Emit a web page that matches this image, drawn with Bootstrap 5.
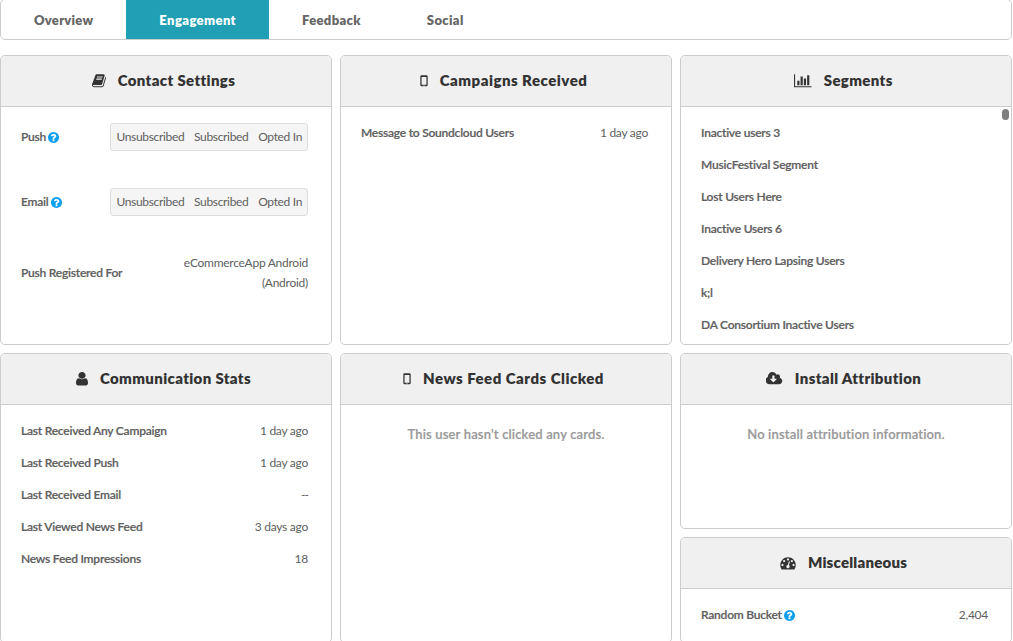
<!DOCTYPE html>
<html lang="en">
<head>
<meta charset="utf-8">
<meta name="viewport" content="width=device-width, initial-scale=1">
<title>User profile – Engagement</title>
<link href="https://cdn.jsdelivr.net/npm/bootstrap@5.3.0/dist/css/bootstrap.min.css" rel="stylesheet">
<style>
body{font-family:Lato,"Open Sans",sans-serif;font-size:12px;line-height:20px;color:#606060;background:#fff;overflow:hidden;height:641px}
.page{width:1012px}
.profile-tabs{height:41px;margin-top:-1px;border:1px solid #ccc;border-radius:5px;overflow:hidden}
.profile-tabs .nav-link{height:39px;padding:0 33px;line-height:41px;font-size:13px;font-weight:800;color:#666;border-radius:0;letter-spacing:.25px}
.profile-tabs .nav-link.active{background:#219fb5;color:#fff;letter-spacing:.4px}
.profile-tabs .nav-link.active~.nav-link{letter-spacing:.35px}
.board{display:grid;grid-template-columns:repeat(3,332px);gap:8px;margin-top:15px}
.panel{height:290px;border:1px solid #ccc;border-radius:5px;overflow:hidden}
.panel>.card-header{flex:none;height:52px;padding:0 5px 1px 0;background:#f0f0f0;border-bottom:1px solid #ccc;color:#333;font-size:15px;font-weight:800;letter-spacing:.35px;gap:12px}
.panel>.card-header{height:51px}
.panel>.card-body{padding:16px 23px 0 20px}
.panel h2{font:inherit;margin:0;padding-bottom:2px}
.wider h2{letter-spacing:.5px}
.tighter h2{letter-spacing:.22px}
.ico{height:15.5px;fill:currentColor;flex:none}
.line{height:20px;margin-bottom:12px}
.line b{font-weight:600;-webkit-text-stroke:.2px;letter-spacing:-.23px}
.line span{letter-spacing:-.26px}
.hint{width:11px;height:11px;fill:#0d9ff0;vertical-align:-1.5px;margin-left:2px}
.choice{height:28px;border:1px solid #ddd;border-radius:3px;background:#f5f5f5;padding:0 5px;gap:9.8px}
.choice span{letter-spacing:-.34px}
.empty{font-size:13px;font-weight:600;color:#999;text-align:center;padding:3px 0 0 3px;letter-spacing:.16px;-webkit-text-stroke:.2px}
.thumb{position:absolute;right:2px;top:53px;width:7px;height:11px;border-radius:4px;background:#7f7f7f}
</style>
</head>
<body>
<svg class="d-none"><defs>
<symbol id="q" viewBox="128 128 1536 1536"><path d="M1024 1376v-192q0-14-9-23t-23-9h-192q-14 0-23 9t-9 23v192q0 14 9 23t23 9h192q14 0 23-9t9-23zm256-672q0-88-55.5-163t-138.5-116-170-41q-243 0-371 213-15 24 8 42l132 100q7 6 19 6 16 0 25-12 53-68 86-92 34-24 86-24 48 0 85.5 26t37.5 59q0 38-20 61t-68 45q-63 28-115.5 86.5t-52.5 125.5v36q0 14 9 23t23 9h192q14 0 23-9t9-23q0-19 21.5-49.5t54.5-49.5q32-18 49-28.5t46-35 44.5-48 28-60.5 12.5-81zm384 192q0 209-103 385.5t-279.5 279.5-385.5 103-385.5-103-279.5-279.5-103-385.5 103-385.5 279.5-279.5 385.5-103 385.5 103 279.5 279.5 103 385.5z"/></symbol>
<symbol id="mobile" viewBox="0 0 8 16"><path fill-rule="evenodd" d="M1.5 2.4h5q1.3 0 1.3 1.3v8.8q0 1.3-1.3 1.3h-5q-1.3 0-1.3-1.3v-8.8q0-1.3 1.3-1.3zM1.5 4.2v7.8h5v-7.8zM3.5 12.5h1v.7h-1z"/></symbol>
</defs></svg>
<div class="page">
  <nav class="nav profile-tabs">
    <a class="nav-link" href="#"><span>Overview</span></a>
    <a class="nav-link active" href="#"><span>Engagement</span></a>
    <a class="nav-link" href="#"><span>Feedback</span></a>
    <a class="nav-link" href="#"><span>Social</span></a>
  </nav>
  <main class="board">
    <section class="card panel">
      <div class="card-header d-flex justify-content-center align-items-center"><svg class="ico" width="14" viewBox="64 0 1664 1792"><path d="M1703 478q40 57 18 129l-275 906q-19 64-76.5 107.5t-122.5 43.5h-923q-77 0-148.5-53.5t-99.5-131.5q-24-67-2-127 0-4 3-27t4-37q1-8-3-21.5t-3-19.5q2-11 8-21t16.5-23.5 16.5-23.5q23-38 45-91.5t30-91.5q3-10 .5-30t-.5-28q3-11 17-28t17-23q21-36 42-92t25-90q1-9-2.5-32t.5-28q4-13 22-30.5t22-22.5q19-26 42.5-84.5t27.5-96.5q1-8-3-25.5t-2-26.5q2-8 9-18t18-23 17-21q8-12 16.5-30.5t15-35 16-36 19.5-32 26.5-23.5 36-11.5 47.5 5.5l-1 3q38-9 51-9h761q74 0 114 56t18 130l-274 906q-36 119-71.5 153.5t-128.5 34.5h-869q-27 0-38 15-11 16-1 43 24 70 144 70h923q29 0 56-15.5t35-41.5l300-987q7-22 5-57 38 15 59 43zm-1064 2q-4 13 2 22.5t20 9.5h608q13 0 25.5-9.5t16.5-22.5l21-64q4-13-2-22.5t-20-9.5h-608q-13 0-25.5 9.5t-16.5 22.5zm-83 256q-4 13 2 22.5t20 9.5h608q13 0 25.5-9.5t16.5-22.5l21-64q4-13-2-22.5t-20-9.5h-608q-13 0-25.5 9.5t-16.5 22.5z"/></svg><h2>Contact Settings</h2></div>
      <div class="card-body">
        <div class="d-flex justify-content-between align-items-center line" style="height:28px;margin-bottom:37px"><b>Push<svg class="hint"><use href="#q"/></svg></b><div class="choice d-flex align-items-center"><span>Unsubscribed</span><span>Subscribed</span><span>Opted In</span></div></div>
        <div class="d-flex justify-content-between align-items-center line" style="height:28px;margin-bottom:37px"><b>Email<svg class="hint"><use href="#q"/></svg></b><div class="choice d-flex align-items-center"><span>Unsubscribed</span><span>Subscribed</span><span>Opted In</span></div></div>
        <div class="d-flex justify-content-between align-items-center line" style="height:40px"><b>Push Registered For</b><span class="text-end">eCommerceApp Android<br>(Android)</span></div>
      </div>
    </section>
    <section class="card panel">
      <div class="card-header wider d-flex justify-content-center align-items-center"><svg class="ico" width="8"><use href="#mobile"/></svg><h2>Campaigns Received</h2></div>
      <div class="card-body"><div class="d-flex justify-content-between line"><b>Message to Soundcloud Users</b><span>1 day ago</span></div></div>
    </section>
    <section class="card panel">
      <div class="card-header d-flex justify-content-center align-items-center"><svg class="ico" width="17.5" viewBox="0 0 2048 1792"><path d="M640 896v512h-256v-512h256zm384-512v1024h-256v-1024h256zm1024 1152v128h-2048v-1536h128v1408h1920zm-640-896v768h-256v-768h256zm384-384v1152h-256v-1152h256z"/></svg><h2>Segments</h2></div>
      <div class="card-body">
        <div class="line"><b>Inactive users 3</b></div>
        <div class="line"><b>MusicFestival Segment</b></div>
        <div class="line"><b>Lost Users Here</b></div>
        <div class="line"><b>Inactive Users 6</b></div>
        <div class="line"><b>Delivery Hero Lapsing Users</b></div>
        <div class="line"><b>k;l</b></div>
        <div class="line mb-0"><b>DA Consortium Inactive Users</b></div>
      </div>
      <i class="thumb"></i>
    </section>
    <section class="card panel">
      <div class="card-header d-flex justify-content-center align-items-center"><svg class="ico" width="12" viewBox="256 0 1280 1792" preserveAspectRatio="none"><path d="M1536 1399q0 109-62.5 187t-150.5 78h-854q-88 0-150.5-78t-62.5-187q0-85 8.5-160.5t31.5-152 58.5-131 94-89 134.5-34.5q131 128 313 128t313-128q76 0 134.5 34.5t94 89 58.5 131 31.5 152 8.5 160.5zm-256-887q0 159-112.5 271.5t-271.5 112.5-271.5-112.5-112.5-271.5 112.5-271.5 271.5-112.5 271.5 112.5 112.5 271.5z"/></svg><h2>Communication Stats</h2></div>
      <div class="card-body">
        <div class="d-flex justify-content-between line"><b>Last Received Any Campaign</b><span>1 day ago</span></div>
        <div class="d-flex justify-content-between line"><b>Last Received Push</b><span>1 day ago</span></div>
        <div class="d-flex justify-content-between line"><b>Last Received Email</b><span style="letter-spacing:-.9px">--</span></div>
        <div class="d-flex justify-content-between line"><b>Last Viewed News Feed</b><span>3 days ago</span></div>
        <div class="d-flex justify-content-between line"><b>News Feed Impressions</b><span>18</span></div>
      </div>
    </section>
    <section class="card panel">
      <div class="card-header wider d-flex justify-content-center align-items-center"><svg class="ico" width="8"><use href="#mobile"/></svg><h2>News Feed Cards Clicked</h2></div>
      <div class="card-body"><div class="empty">This user hasn't clicked any cards.</div></div>
    </section>
    <div class="d-flex flex-column gap-2">
      <section class="card panel" style="height:176px">
        <div class="card-header d-flex justify-content-center align-items-center"><svg class="ico" width="17" viewBox="0 0 1920 1792"><path d="M1216 928q0-14-9-23t-23-9h-224v-352q0-13-9.5-22.5t-22.5-9.5h-192q-13 0-22.5 9.5t-9.5 22.5v352h-224q-13 0-22.5 9.5t-9.5 22.5q0 14 9 23l352 352q9 9 23 9t23-9l351-351q10-12 10-24zm640 224q0 159-112.5 271.5t-271.5 112.5h-1088q-185 0-316.5-131.5t-131.5-316.5q0-130 70-240t188-165q-2-30-2-43 0-212 150-362t362-150q156 0 285.5 87t188.5 231q71-62 166-62 106 0 181 75t75 181q0 76-41 138 130 31 213.5 135.5t83.5 238.5z"/></svg><h2>Install Attribution</h2></div>
        <div class="card-body"><div class="empty">No install attribution information.</div></div>
      </section>
      <section class="card panel" style="height:106px">
        <div class="card-header tighter d-flex justify-content-center align-items-center"><svg class="ico" width="16" viewBox="0 0 1792 1792"><path d="M384 1152q0-53-37.5-90.5t-90.5-37.5-90.5 37.5-37.5 90.5 37.5 90.5 90.5 37.5 90.5-37.5 37.5-90.5zm192-448q0-53-37.5-90.5t-90.5-37.5-90.5 37.5-37.5 90.5 37.5 90.5 90.5 37.5 90.5-37.5 37.5-90.5zm428 481l101-382q6-26-7.5-48.5t-38.5-29.5-48 6.5-30 39.5l-101 382q-60 5-107 43.5t-63 98.5q-20 77 20 146t117 89 146-20 89-117q16-60-6-117t-72-91zm660-33q0-53-37.5-90.5t-90.5-37.5-90.5 37.5-37.5 90.5 37.5 90.5 90.5 37.5 90.5-37.5 37.5-90.5zm-640-640q0-53-37.5-90.5t-90.5-37.5-90.5 37.5-37.5 90.5 37.5 90.5 90.5 37.5 90.5-37.5 37.5-90.5zm448 192q0-53-37.5-90.5t-90.5-37.5-90.5 37.5-37.5 90.5 37.5 90.5 90.5 37.5 90.5-37.5 37.5-90.5zm320 448q0 261-141 483-19 29-54 29h-1402q-35 0-54-29-141-221-141-483 0-182 71-348t191-286 286-191 348-71 348 71 286 191 191 286 71 348z"/></svg><h2>Miscellaneous</h2></div>
        <div class="card-body"><div class="d-flex justify-content-between line"><b>Random Bucket<svg class="hint"><use href="#q"/></svg></b><span>2,404</span></div></div>
      </section>
    </div>
  </main>
</div>
<script src="https://cdn.jsdelivr.net/npm/bootstrap@5.3.0/dist/js/bootstrap.bundle.min.js"></script>
</body>
</html>
